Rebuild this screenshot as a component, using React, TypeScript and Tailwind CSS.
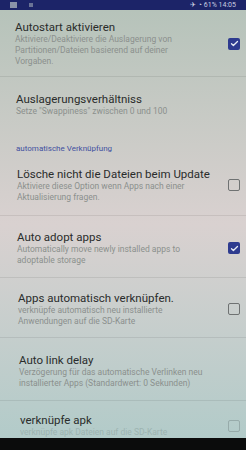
import React from 'react';

type Pref = {
  title: string;
  lines: string[];
  check?: 'on' | 'off';
  pad: string;
  faint?: boolean;
};

const Checkbox: React.FC<{ on: boolean; faint?: boolean }> = ({ on, faint }) =>
  on ? (
    <div className="w-[12px] h-[12px] rounded-[2px] bg-[#2e3b8f] flex items-center justify-center">
      <svg width="9" height="9" viewBox="0 0 24 24" fill="none" stroke="#e8ecf4" strokeWidth="3.5" strokeLinecap="round" strokeLinejoin="round">
        <path d="M4 12.5l5 5L20 6.5" />
      </svg>
    </div>
  ) : (
    <div className={`w-[12px] h-[12px] rounded-[2px] border-[1.5px] ${faint ? 'border-[#97abaa]' : 'border-[#6f7272]'}`} />
  );

const Row: React.FC<{ p: Pref; last?: boolean }> = ({ p, last }) => (
  <div className={`flex items-center pr-[5px] ${p.pad} ${last ? '' : 'border-b border-[#00000014]'}`}>
    <div className="flex-1">
      <div className="text-[11.5px] leading-[14px] text-[#2a2c2b] whitespace-nowrap">{p.title}</div>
      {p.lines.map((l) => (
        <div key={l} className={`text-[8.5px] leading-[11px] whitespace-nowrap ${p.faint ? 'text-[#9db4b1]' : 'text-[#8b908d]'}`}>
          {l}
        </div>
      ))}
    </div>
    {p.check && (
      <div className="w-[14px] flex justify-center">
        <Checkbox on={p.check === 'on'} faint={p.faint} />
      </div>
    )}
  </div>
);

export default function App() {
  const first: Pref = {
    title: 'Autostart aktivieren',
    lines: ['Aktiviere/Deaktiviere die Auslagerung von', 'Partitionen/Dateien basierend auf deiner', 'Vorgaben.'],
    check: 'on',
    pad: 'pl-[15px] pt-[10px] pb-[9px]',
  };
  const rows: Pref[] = [
    {
      title: 'Lösche nicht die Dateien beim Update',
      lines: ['Aktiviere diese Option wenn Apps nach einer', 'Aktualisierung fragen.'],
      check: 'off',
      pad: 'pl-[17px] pt-[12px] pb-[12px]',
    },
    {
      title: 'Auto adopt apps',
      lines: ['Automatically move newly installed apps to', 'adoptable storage'],
      check: 'on',
      pad: 'pl-[17px] pt-[14px] pb-[11px]',
    },
    {
      title: 'Apps automatisch verknüpfen.',
      lines: ['verknüpfe automatisch neu installierte', 'Anwendungen auf die SD-Karte'],
      check: 'off',
      pad: 'pl-[18px] pt-[13px] pb-[10px]',
    },
    {
      title: 'Auto link delay',
      lines: ['Verzögerung für das automatische Verlinken neu', 'installierter Apps (Standardwert: 0 Sekunden)'],
      pad: 'pl-[19px] pt-[15px] pb-[11px]',
    },
    {
      title: 'verknüpfe apk',
      lines: ['verknüpfe apk Dateien auf die SD-Karte'],
      check: 'off',
      pad: 'pl-[20px] pt-[12px] pb-[6px]',
      faint: true,
    },
  ];

  return (
    <div className="w-[246px] h-[450px] bg-[#0b0c0c] flex flex-col overflow-hidden" style={{ fontFamily: 'Roboto, "Noto Sans", sans-serif' }}>
      {/* status bar */}
      <div className="h-[10px] bg-[#1c2468] flex items-center justify-between px-[10px]">
        <div className="flex items-center gap-[12px]">
          <div className="w-[7px] h-[6px] bg-[#8a93a8]" />
          <div className="w-[4px] h-[4px] bg-[#6a7396]" />
        </div>
        <div className="text-[7px] leading-[10px] text-[#c9cde0] whitespace-nowrap">✈ ◔ 61% 14:05</div>
      </div>

      <div className="h-[428px] overflow-hidden bg-gradient-to-b from-[#b6c3ba] via-[#d9d1d0] to-[#b2cbc9]">
        <Row p={first} />

        <div className="pl-[16px] pt-[15px]">
          <div className="text-[11.5px] leading-[14px] text-[#2a2c2b] whitespace-nowrap">Auslagerungsverhältniss</div>
          <div className="text-[8.5px] leading-[11px] text-[#8b908d] whitespace-nowrap">Setze "Swappiness" zwischen 0 und 100</div>
        </div>

        <div className="pl-[16px] pt-[26px] text-[8px] leading-[12px] text-[#4250a0]">automatische Verknüpfung</div>

        {rows.map((p, i) => (
          <Row key={p.title} p={p} last={i === rows.length - 1} />
        ))}
      </div>
    </div>
  );
}
